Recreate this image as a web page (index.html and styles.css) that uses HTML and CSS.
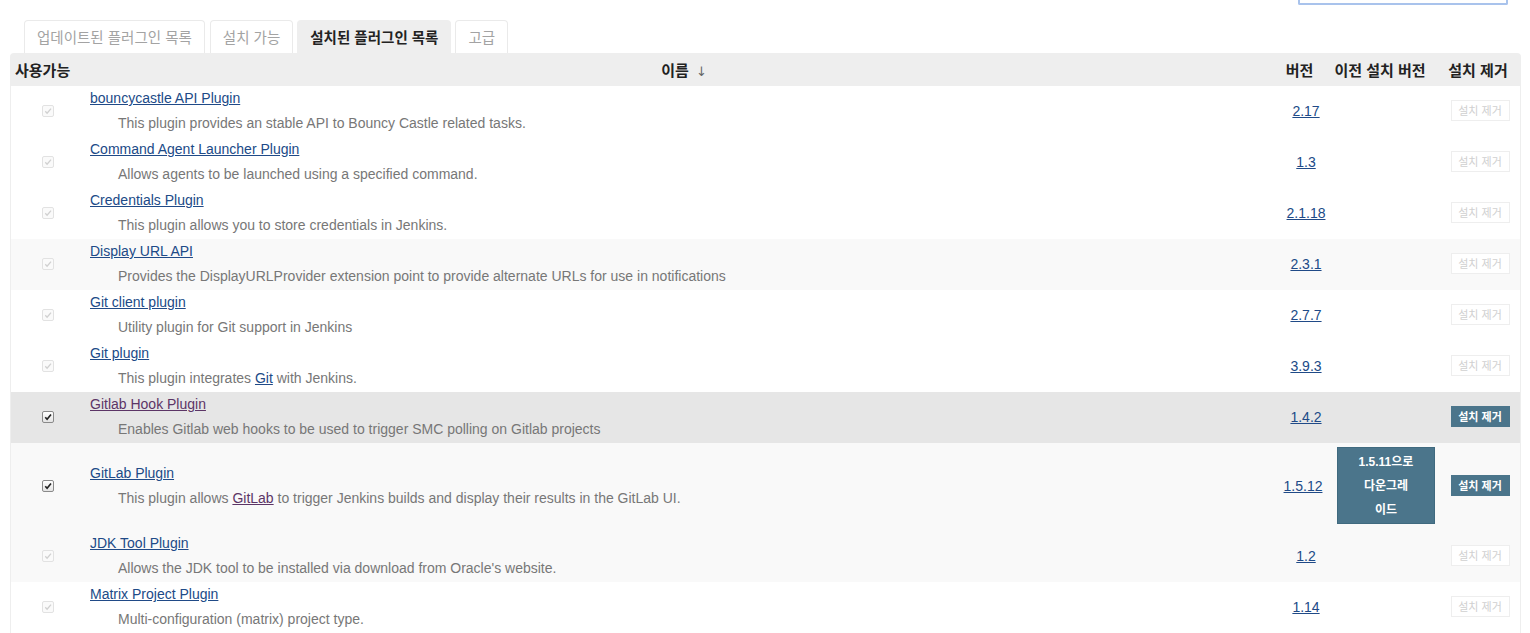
FILE: index.html
```html
<!DOCTYPE html>
<html lang="ko">
<head>
<meta charset="utf-8">
<title>플러그인 관리</title>
<link rel="stylesheet" href="styles.css">
</head>
<body>
<div class="top"><div class="search"></div></div>
<div class="page">
  <ul class="tabs">
    <li class="tab">업데이트된 플러그인 목록</li>
    <li class="tab">설치 가능</li>
    <li class="tab active">설치된 플러그인 목록</li>
    <li class="tab">고급</li>
  </ul>
  <table class="plugins">
    <colgroup>
      <col class="w-enable">
      <col>
      <col class="w-ver">
      <col class="w-prev">
      <col class="w-un">
    </colgroup>
    <thead>
      <tr>
        <th class="h-enable">사용가능</th>
        <th class="h-name">이름 <span class="arrow">↓</span></th>
        <th class="h-ver">버전</th>
        <th class="h-prev">이전 설치 버전</th>
        <th>설치 제거</th>
      </tr>
    </thead>
    <tbody>
      <tr>
        <td><span class="cb"><svg viewBox="0 0 11 11"><path d="M2.5 5.8 L4.5 8 L8.8 2.8"/></svg></span></td>
        <td class="name"><a href="#">bouncycastle API Plugin</a><div class="desc">This plugin provides an stable API to Bouncy Castle related tasks.</div></td>
        <td class="ver"><a href="#">2.17</a></td>
        <td></td>
        <td><span class="ubtn">설치 제거</span></td>
      </tr>
      <tr>
        <td><span class="cb"><svg viewBox="0 0 11 11"><path d="M2.5 5.8 L4.5 8 L8.8 2.8"/></svg></span></td>
        <td class="name"><a href="#">Command Agent Launcher Plugin</a><div class="desc">Allows agents to be launched using a specified command.</div></td>
        <td class="ver"><a href="#">1.3</a></td>
        <td></td>
        <td><span class="ubtn">설치 제거</span></td>
      </tr>
      <tr>
        <td><span class="cb"><svg viewBox="0 0 11 11"><path d="M2.5 5.8 L4.5 8 L8.8 2.8"/></svg></span></td>
        <td class="name"><a href="#">Credentials Plugin</a><div class="desc">This plugin allows you to store credentials in Jenkins.</div></td>
        <td class="ver"><a href="#">2.1.18</a></td>
        <td></td>
        <td><span class="ubtn">설치 제거</span></td>
      </tr>
      <tr class="tint">
        <td><span class="cb"><svg viewBox="0 0 11 11"><path d="M2.5 5.8 L4.5 8 L8.8 2.8"/></svg></span></td>
        <td class="name"><a href="#">Display URL API</a><div class="desc">Provides the DisplayURLProvider extension point to provide alternate URLs for use in notifications</div></td>
        <td class="ver"><a href="#">2.3.1</a></td>
        <td></td>
        <td><span class="ubtn">설치 제거</span></td>
      </tr>
      <tr>
        <td><span class="cb"><svg viewBox="0 0 11 11"><path d="M2.5 5.8 L4.5 8 L8.8 2.8"/></svg></span></td>
        <td class="name"><a href="#">Git client plugin</a><div class="desc">Utility plugin for Git support in Jenkins</div></td>
        <td class="ver"><a href="#">2.7.7</a></td>
        <td></td>
        <td><span class="ubtn">설치 제거</span></td>
      </tr>
      <tr>
        <td><span class="cb"><svg viewBox="0 0 11 11"><path d="M2.5 5.8 L4.5 8 L8.8 2.8"/></svg></span></td>
        <td class="name"><a href="#">Git plugin</a><div class="desc">This plugin integrates <a href="#">Git</a> with Jenkins.</div></td>
        <td class="ver"><a href="#">3.9.3</a></td>
        <td></td>
        <td><span class="ubtn">설치 제거</span></td>
      </tr>
      <tr class="hover">
        <td><span class="cb on"><svg viewBox="0 0 11 11"><path d="M2.5 5.8 L4.5 8 L8.8 2.8"/></svg></span></td>
        <td class="name"><a href="#" class="visited">Gitlab Hook Plugin</a><div class="desc">Enables Gitlab web hooks to be used to trigger SMC polling on Gitlab projects</div></td>
        <td class="ver"><a href="#">1.4.2</a></td>
        <td></td>
        <td><span class="ubtn on">설치 제거</span></td>
      </tr>
      <tr class="tint tall">
        <td><span class="cb on"><svg viewBox="0 0 11 11"><path d="M2.5 5.8 L4.5 8 L8.8 2.8"/></svg></span></td>
        <td class="name"><a href="#">GitLab Plugin</a><div class="desc">This plugin allows <a href="#" class="visited">GitLab</a> to trigger Jenkins builds and display their results in the GitLab UI.</div></td>
        <td class="ver"><a href="#">1.5.12</a></td>
        <td><div class="dbtn"><span>1.5.11으로</span><span>다운그레</span><span>이드</span></div></td>
        <td><span class="ubtn on">설치 제거</span></td>
      </tr>
      <tr class="tint">
        <td><span class="cb"><svg viewBox="0 0 11 11"><path d="M2.5 5.8 L4.5 8 L8.8 2.8"/></svg></span></td>
        <td class="name"><a href="#">JDK Tool Plugin</a><div class="desc">Allows the JDK tool to be installed via download from Oracle's website.</div></td>
        <td class="ver"><a href="#">1.2</a></td>
        <td></td>
        <td><span class="ubtn">설치 제거</span></td>
      </tr>
      <tr>
        <td><span class="cb"><svg viewBox="0 0 11 11"><path d="M2.5 5.8 L4.5 8 L8.8 2.8"/></svg></span></td>
        <td class="name"><a href="#">Matrix Project Plugin</a><div class="desc">Multi-configuration (matrix) project type.</div></td>
        <td class="ver"><a href="#">1.14</a></td>
        <td></td>
        <td><span class="ubtn">설치 제거</span></td>
      </tr>
    </tbody>
  </table>
</div>
</body>
</html>
```
FILE: styles.css
```css
* { box-sizing: border-box; }
html, body { margin: 0; padding: 0; background: #fff; }
body {
  font-family: "Liberation Sans", Arial, "Noto Sans CJK KR", sans-serif;
  font-size: 14px;
  color: #333;
  width: 1530px;
  height: 633px;
  overflow: hidden;
}
.top {
  height: 20px;
  display: flex;
  justify-content: flex-end;
  padding-right: 22px;
}
.search {
  width: 210px;
  height: 5px;
  border: 2px solid #a9c3ec;
  border-top: none;
  border-radius: 0 0 2px 2px;
}
.page { padding-left: 10px; width: 1521px; }
.tabs {
  list-style: none;
  margin: 0;
  padding: 0 0 0 14px;
  display: flex;
  gap: 4px;
  height: 33px;
}
.tab {
  border: 1px solid #eaeaea;
  border-bottom: none;
  border-radius: 4px 4px 0 0;
  padding: 0 12px;
  line-height: 32px;
  color: #a3a3a3;
  font-size: 14.5px;
  font-family: "Noto Sans CJK KR", sans-serif;
}
.tab:first-child { margin-right: 1px; }
.tab.active { background: #eee; border-color: #eee; color: #222; font-weight: bold; }

.plugins {
  width: 1511px;
  border-collapse: separate;
  border-spacing: 0;
  table-layout: fixed;
}
.w-enable { width: 75px; }
.w-ver { width: 62px; }
.w-prev { width: 104px; }
.w-un { width: 83px; }

.plugins th {
  background: #eee;
  height: 33px;
  padding: 0 5px;
  font-size: 15px;
  font-weight: bold;
  color: #222;
  text-align: center;
  white-space: nowrap;
  font-family: "Noto Sans CJK KR", sans-serif;
}
.plugins th.h-enable { text-align: left; border-top-left-radius: 4px; }
.plugins th.h-name { padding-left: 16px; }
.plugins th.h-ver { padding-right: 12px; }
.plugins th.h-prev { padding: 0 12px 0 0; }
.plugins th:last-child { border-top-right-radius: 4px; padding-left: 2px; }
.arrow { font-weight: normal; color: #666; font-family: "DejaVu Sans", sans-serif; font-size: 13px; margin-left: 3px; }

.plugins td {
  padding: 3px 5px 5px;
  vertical-align: middle;
}
.plugins td:first-child { border-left: 1px solid #eee; text-align: center; }
.plugins td:last-child { border-right: 1px solid #eee; text-align: center; }
.plugins tr.tint td { background: #f9f9f9; }
.plugins tr.hover td { background: #e6e6e6; }
.plugins tr.tall td { padding: 4px 3px 7px; }
.plugins tr.tall td.name { padding-left: 5px; }

a { color: #204a87; text-decoration: underline; }
a.visited { color: #5c3566; }

.name a { line-height: 18px; }
.name > a { display: inline-block; vertical-align: top; }
.desc {
  margin: 7px 0 0 28px;
  line-height: 18px;
  color: #777;
  white-space: nowrap;
}
.ver { text-align: center; }
.plugins td.ver { padding-left: 8px; padding-right: 2px; }

.cb {
  display: inline-block;
  width: 12px;
  height: 12px;
  border: 1px solid #e2e2e2;
  border-radius: 2px;
  background: #fafafa;
  vertical-align: middle;
  margin-top: -2px;
}
.cb svg { display: block; width: 10px; height: 10px; }
.cb svg path { fill: none; stroke: #d0d0d0; stroke-width: 1.4; }
.cb.on { border-color: #8a8a8a; background: linear-gradient(#ffffff, #e4e4e4); }
.cb.on svg path { stroke: #222; stroke-width: 1.8; }

.ubtn {
  display: inline-block;
  width: 59px;
  height: 21px;
  line-height: 19px;
  border: 1px solid #eee;
  background: #fff;
  color: #d0d0d0;
  font-size: 11px;
  font-family: "Noto Sans CJK KR", sans-serif;
  text-align: center;
  vertical-align: middle;
  margin-left: 2px;
}
.ubtn.on {
  background: #4b758b;
  border-color: #4b758b;
  color: #fff;
  font-weight: bold;
}
.dbtn {
  width: 98px;
  height: 77px;
  margin: 0 auto;
  background: #4b758b;
  border: 1px solid #406a7f;
  color: #fff;
  font-weight: bold;
  font-size: 12px;
  padding: 2px 0 1px;
  text-align: center;
  font-family: "Liberation Sans", "Noto Sans CJK KR", sans-serif;
  display: flex;
  flex-direction: column;
}
.dbtn span { display: block; height: 24px; line-height: 24px; }
```
